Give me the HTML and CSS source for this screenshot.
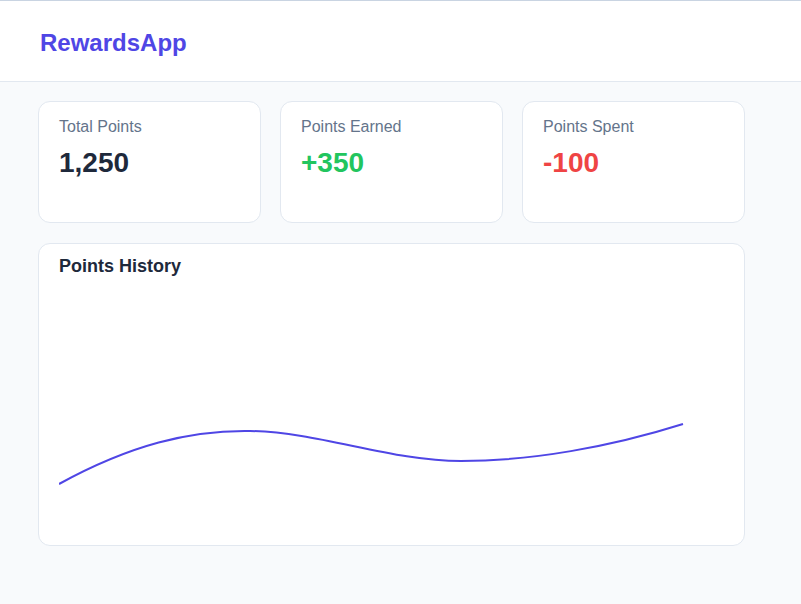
FILE: index.html
```html
<!DOCTYPE html>
<html lang="en">
<head>
<meta charset="utf-8">
<title>RewardsApp</title>
<link rel="stylesheet" href="styles.css">
</head>
<body>
<header class="topbar">
  <div class="logo">RewardsApp</div>
</header>
<main class="main">
  <section class="stats">
    <div class="card stat">
      <div class="stat-label">Total Points</div>
      <div class="stat-value">1,250</div>
    </div>
    <div class="card stat">
      <div class="stat-label">Points Earned</div>
      <div class="stat-value positive">+350</div>
    </div>
    <div class="card stat">
      <div class="stat-label">Points Spent</div>
      <div class="stat-value negative">-100</div>
    </div>
  </section>
  <section class="card chart-card">
    <h2 class="chart-title">Points History</h2>
    <svg class="chart" width="664" height="247" viewBox="0 0 664 247">
      <path d="M0,203 C71,164 131,149 191,150 C261,151 331,180 402,180 C472,180 551,166 624,143" fill="none" stroke="#4f46e5" stroke-width="2"/>
    </svg>
  </section>
</main>
</body>
</html>
```
FILE: styles.css
```css
* { box-sizing: border-box; }
html, body { margin: 0; padding: 0; }
body {
  background: #f8fafc;
  font-family: "Liberation Sans", Arial, sans-serif;
  color: #1e293b;
}
.topbar {
  height: 82px;
  background: #ffffff;
  border-top: 1px solid #c9d4e2;
  border-bottom: 1px solid #e2e8f0;
  display: flex;
  align-items: center;
  padding: 4px 40px 0;
}
.logo {
  font-size: 24px;
  font-weight: 700;
  color: #4f46e5;
}
.main {
  width: 707px;
  margin-left: 38px;
  padding-top: 19px;
  display: flex;
  flex-direction: column;
  gap: 20px;
}
.stats {
  display: grid;
  grid-template-columns: repeat(3, 1fr);
  gap: 19px;
}
.card {
  background: #ffffff;
  border: 1px solid #e2e8f0;
  border-radius: 12px;
}
.stat {
  height: 122px;
  padding: 16px 20px;
}
.stat-label {
  font-size: 16px;
  color: #64748b;
}
.stat-value {
  margin-top: 11px;
  font-size: 28px;
  font-weight: 700;
  color: #1e293b;
}
.positive { color: #22c55e; }
.negative { color: #ef4444; }
.chart-card {
  height: 303px;
  padding: 12px 20px 16px;
}
.chart-title {
  margin: 0;
  font-size: 18px;
  font-weight: 700;
  color: #1e293b;
}
.chart {
  display: block;
  margin-top: 4px;
}
```
